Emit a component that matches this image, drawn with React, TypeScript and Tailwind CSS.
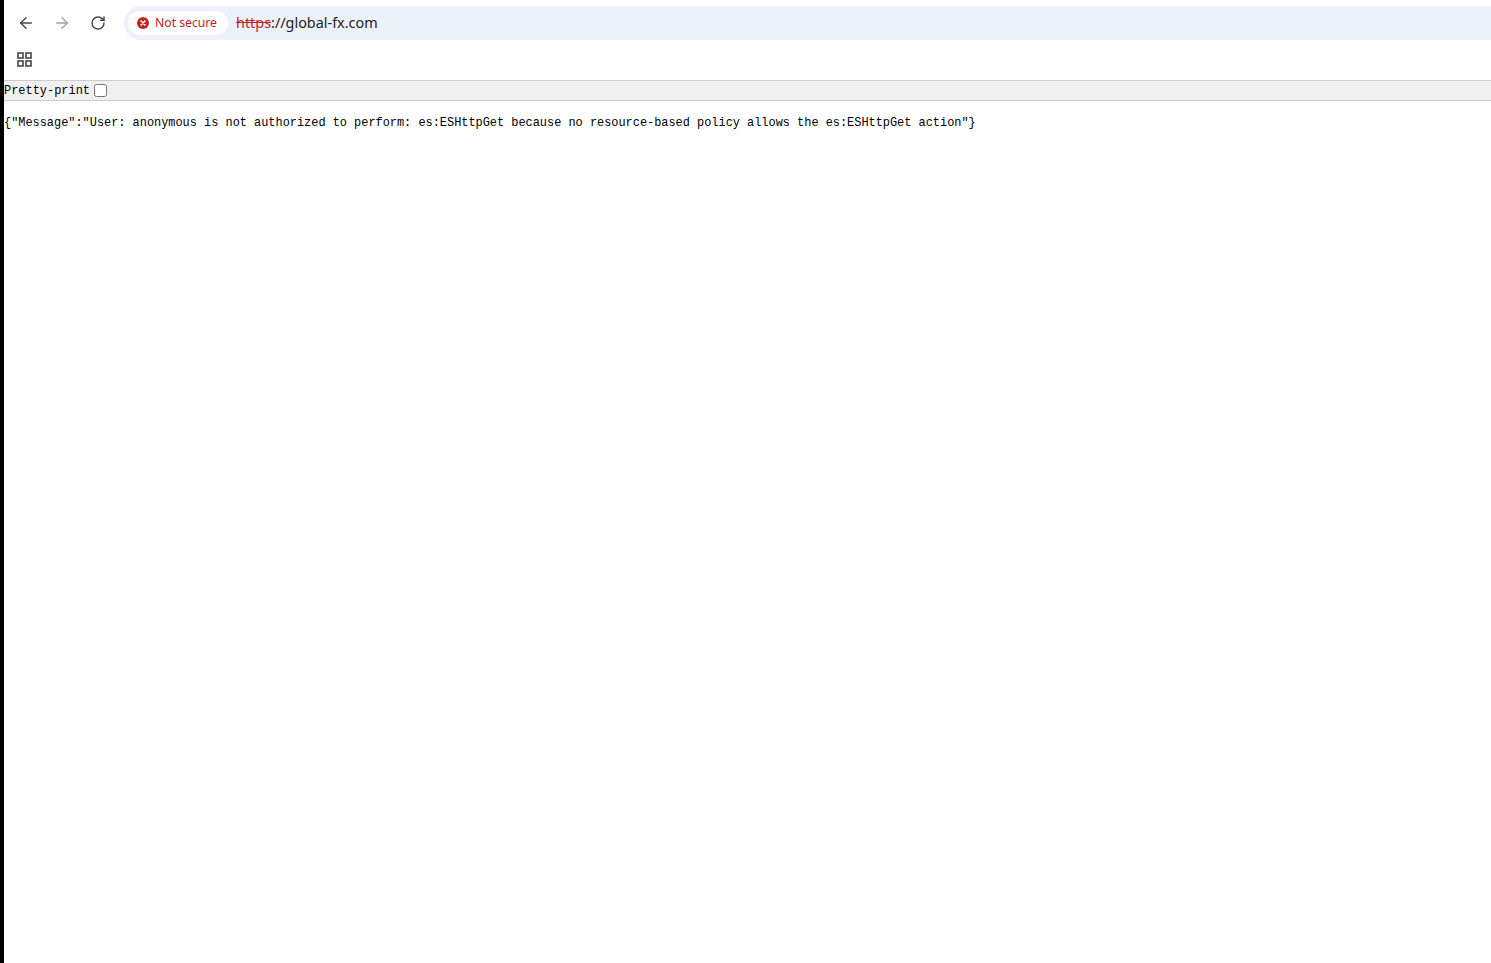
import { ArrowLeft, ArrowRight, RotateCw } from "lucide-react";

export default function App() {
  return (
    <div className="flex h-[963px] w-full overflow-hidden bg-white">
      {/* window edge */}
      <div className="h-full w-[4px] flex-none bg-black" />

      <div className="flex min-w-0 flex-1 flex-col">
        {/* Toolbar */}
        <div className="flex h-[46px] flex-none items-center">
          <button className="ml-[13px] flex h-[18px] w-[18px] items-center justify-center text-[#474747]">
            <ArrowLeft size={18} strokeWidth={2} />
          </button>
          <button className="ml-[18px] flex h-[18px] w-[18px] items-center justify-center text-[#a3a3a3]">
            <ArrowRight size={18} strokeWidth={2} />
          </button>
          <button className="ml-[18px] flex h-[18px] w-[18px] items-center justify-center text-[#474747]">
            <RotateCw size={16} strokeWidth={2.2} />
          </button>

          {/* Address bar */}
          <div className="ml-[17px] flex h-[34px] flex-1 items-center rounded-l-[17px] bg-[#ecf1fa] pl-[4px] font-['Noto_Sans',sans-serif]">
            <div className="flex h-[24px] w-[100px] items-center rounded-full bg-white pl-[9px]">
              <svg width="12" height="12" viewBox="0 0 12 12" className="flex-none">
                <circle cx="6" cy="6" r="6" fill="#c5221f" />
                <path d="M4 4l4 4M8 4l-4 4" stroke="#fff" strokeWidth="1.5" strokeLinecap="round" />
              </svg>
              <span className="ml-[6px] pt-[1px] text-[12.2px] leading-none text-[#c5221f]">Not secure</span>
            </div>
            <div className="ml-[8px] text-[14.4px] leading-none text-[#202124]">
              <span className="text-[#c5221f] line-through">https</span>://global-fx.com
            </div>
          </div>
        </div>

        {/* Bookmarks */}
        <div className="flex h-[34px] flex-none items-center pb-[8px] pl-[13px]">
          <svg width="15" height="15" viewBox="0 0 15 15" fill="none" stroke="#474747" strokeWidth="1.6">
            <rect x="1" y="1" width="5" height="5" />
            <rect x="9" y="1" width="5" height="5" />
            <rect x="1" y="9" width="5" height="5" />
            <rect x="9" y="9" width="5" height="5" />
          </svg>
        </div>

        {/* Pretty-print bar */}
        <div className="flex h-[21px] flex-none items-center border-y border-[#cccccc] bg-[#f0f0f0] font-['Liberation_Mono',monospace] text-[11.95px] text-black">
          <span className="pt-[2px]">Pretty-print</span>
          <span className="ml-[4px] h-[13px] w-[13px] rounded-[2.5px] border border-[#767676] bg-white" />
        </div>

        {/* Response body */}
        <pre className="mt-[15px] font-['Liberation_Mono',monospace] text-[11.915px] leading-[15px] text-black">
          {'{"Message":"User: anonymous is not authorized to perform: es:ESHttpGet because no resource-based policy allows the es:ESHttpGet action"}'}
        </pre>
      </div>
    </div>
  );
}
